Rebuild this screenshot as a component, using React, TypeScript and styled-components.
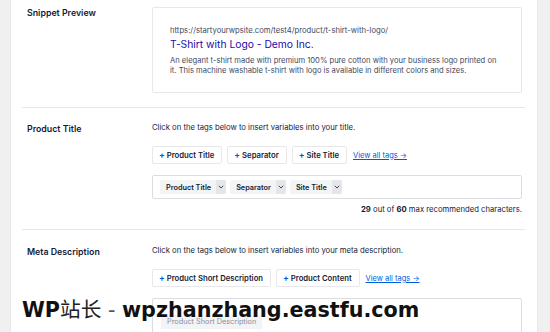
import styled, { createGlobalStyle } from "styled-components"

const GlobalStyle = createGlobalStyle`
    html, body {
        margin: 0;
        padding: 0;
        background: #f0f0f1;
    }
    body {
        width: 550px;
        height: 332px;
        overflow: hidden;
        font-family: Inter, "Liberation Sans", sans-serif;
        color: #141b38;
    }
`

type Tag = { label: string }

const titleTags: Tag[] = [{ label: "Product Title" }, { label: "Separator" }, { label: "Site Title" }]
const metaTags: Tag[] = [{ label: "Product Short Description" }, { label: "Product Content" }]

export default function App() {
    return (
        <Page>
            <GlobalStyle />
            <Panel>
                <Row top={7} bottom={14}>
                    <Label>Snippet Preview</Label>
                    <Content>
                        <PreviewBox>
                            <Url>https://startyourwpsite.com/test4/product/t-shirt-with-logo/</Url>
                            <PreviewTitle>T-Shirt with Logo - Demo Inc.</PreviewTitle>
                            <PreviewDesc>
                                An elegant t-shirt made with premium 100% pure cotton with your business logo printed on
                                it. This machine washable t-shirt with logo is available in different colors and sizes.
                            </PreviewDesc>
                        </PreviewBox>
                    </Content>
                </Row>

                <Row top={15} bottom={14}>
                    <Label>Product Title</Label>
                    <Content>
                        <Hint>Click on the tags below to insert variables into your title.</Hint>
                        <TagBar>
                            {titleTags.map(t => (
                                <TagButton key={t.label}><Plus>+</Plus>{t.label}</TagButton>
                            ))}
                            <ViewAll>View all tags →</ViewAll>
                        </TagBar>
                        <InputBox>
                            {titleTags.map(t => (
                                <Chip key={t.label}>
                                    <ChipText>{t.label}</ChipText>
                                    <ChipArrow>
                                        <svg width="6" height="4" viewBox="0 0 6 4">
                                            <path d="M0.8 0.8 L3 3 L5.2 0.8" fill="none" stroke="#434960" strokeWidth="1" />
                                        </svg>
                                    </ChipArrow>
                                </Chip>
                            ))}
                        </InputBox>
                        <Counter><b>29</b> out of <b>60</b> max recommended characters.</Counter>
                    </Content>
                </Row>

                <Row top={16} bottom={0} last>
                    <Label>Meta Description</Label>
                    <Content>
                        <Hint>Click on the tags below to insert variables into your meta description.</Hint>
                        <TagBar>
                            {metaTags.map(t => (
                                <TagButton key={t.label}><Plus>+</Plus>{t.label}</TagButton>
                            ))}
                            <ViewAll>View all tags →</ViewAll>
                        </TagBar>
                        <TextArea>
                            <Placeholder>Product Short Description</Placeholder>
                        </TextArea>
                    </Content>
                </Row>
            </Panel>
            <Watermark>
                <b>WP</b><Cjk>站长</Cjk><Dash> - </Dash><b>wpzhanzhang.eastfu.com</b>
            </Watermark>
        </Page>
    )
}

const Page = styled.div`
    position: relative;
    width: 550px;
    height: 332px;
    display: flex;
    background: #f0f0f1;
    overflow: hidden;
`

const Panel = styled.div`
    margin-left: 10px;
    width: 528px;
    height: 100%;
    background: #fff;
    border-left: 1px solid #e8e8eb;
    border-right: 1px solid #e8e8eb;
    box-sizing: border-box;
    padding: 0 12px 0 11px;
`

const Row = styled.div<{ top: number; bottom: number; last?: boolean }>`
    display: flex;
    padding: ${p => p.top}px 0 ${p => p.bottom}px 0;
    border-bottom: ${p => (p.last ? "none" : "1px solid #e8e8eb")};
`

const Label = styled.div`
    width: 125px;
    padding-left: 5px;
    font-size: 8.8px;
    font-weight: 600;
    line-height: 12px;
`

const Content = styled.div`
    width: 370px;
    display: flex;
    flex-direction: column;
`

const PreviewBox = styled.div`
    height: 86px;
    box-sizing: border-box;
    border: 1px solid #e8e8eb;
    border-radius: 2px;
    padding: 18px 17px 0 17px;
`

const Url = styled.div`
    font-size: 7.7px;
    line-height: 10px;
    color: #434960;
`

const PreviewTitle = styled.div`
    font-size: 10.3px;
    line-height: 14px;
    color: #1a0dab;
    margin: 1px 0 5px;
`

const PreviewDesc = styled.div`
    font-size: 7.6px;
    line-height: 9.5px;
    color: #434960;
`

const Hint = styled.div`
    font-size: 7.7px;
    line-height: 10px;
    color: #141b38;
`

const TagBar = styled.div`
    display: flex;
    align-items: center;
    gap: 5px;
    margin-top: 13px;
`

const TagButton = styled.div`
    height: 18px;
    box-sizing: border-box;
    display: flex;
    align-items: center;
    padding: 0 7px 0 6px;
    border: 1px solid #e8e8eb;
    border-radius: 2px;
    font-size: 7.7px;
    font-weight: 600;
    color: #141b38;
    white-space: nowrap;
`

const Plus = styled.span`
    color: #005ae0;
    font-weight: 700;
    margin-right: 2px;
    font-size: 8.5px;
`

const ViewAll = styled.span`
    font-size: 7.5px;
    color: #005ae0;
    text-decoration: underline;
    white-space: nowrap;
    margin-left: 1px;
`

const InputBox = styled.div`
    margin-top: 11px;
    height: 24px;
    box-sizing: border-box;
    border: 1px solid #dcdde1;
    border-radius: 2px;
    display: flex;
    align-items: center;
    gap: 4px;
    padding-left: 7px;
`

const Chip = styled.div`
    height: 14px;
    display: flex;
    align-items: stretch;
    background: #f3f4f5;
    border-radius: 2px;
    overflow: hidden;
`

const ChipText = styled.span`
    display: flex;
    align-items: center;
    padding: 0 5px 0 6px;
    font-size: 7.3px;
    font-weight: 600;
    color: #141b38;
`

const ChipArrow = styled.span`
    width: 10px;
    display: flex;
    align-items: center;
    justify-content: center;
    background: #e5e6e9;
`

const Counter = styled.div`
    margin-top: 6px;
    text-align: right;
    font-size: 7.7px;
    line-height: 10px;
    color: #141b38;

    b {
        font-weight: 700;
    }
`

const TextArea = styled.div`
    margin-top: 11px;
    height: 60px;
    box-sizing: border-box;
    border: 1px solid #dcdde1;
    border-radius: 2px;
    padding: 9px 8px;
`

const Placeholder = styled.span`
    display: inline-block;
    background: #f3f4f5;
    font-size: 7.3px;
    line-height: 14px;
    padding: 0 6px;
    color: #8c8f9a;
`

const Watermark = styled.div`
    position: absolute;
    left: 22px;
    top: 294px;
    font-family: "DejaVu Sans", "Noto Sans CJK SC", sans-serif;
    font-size: 20.7px;
    line-height: 28px;
    color: #111;
    white-space: nowrap;

    b {
        font-weight: 700;
    }
`

const Cjk = styled.span`
    font-family: "Noto Sans CJK SC", sans-serif;
    font-weight: 400;
    color: #222;
`

const Dash = styled.span`
    font-weight: 400;
    color: #555;
`
